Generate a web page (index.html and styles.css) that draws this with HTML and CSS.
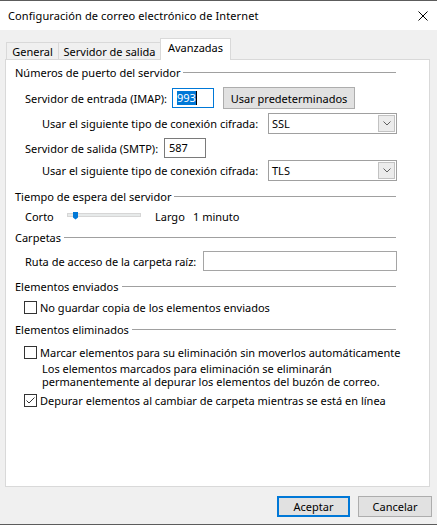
FILE: index.html
```html
<!DOCTYPE html>
<html lang="es">
<head>
<meta charset="utf-8">
<title>Configuración de correo electrónico de Internet</title>
<link rel="stylesheet" href="styles.css">
</head>
<body>
<div class="window">
  <div class="titlebar">
    <span class="title">Configuración de correo electrónico de Internet</span>
    <svg class="close" viewBox="0 0 10 10" width="10" height="10" aria-hidden="true">
      <path d="M0.5 0.5 L9.5 9.5 M9.5 0.5 L0.5 9.5" stroke="#000" stroke-width="1" fill="none"/>
    </svg>
  </div>
  <div class="client">
    <div class="tabs">
      <div class="tab tab-general">General</div>
      <div class="tab tab-server">Servidor de salida</div>
      <div class="tab tab-active">Avanzadas</div>
    </div>
    <div class="panel">
      <div class="content">
        <div class="group g-ports"><span>Números de puerto del servidor</span></div>

        <div class="row row-imap">
          <span class="lbl lbl-imap">Servidor de entrada (IMAP):</span>
          <div class="textbox textbox-port textbox-focus"><span class="sel">993</span><span class="caret"></span></div>
          <button class="btn btn-defaults" type="button">Usar predeterminados</button>
        </div>

        <div class="row row-enc1">
          <span class="lbl lbl-enc">Usar el siguiente tipo de conexión cifrada:</span>
          <div class="combo">
            <span class="combo-value">SSL</span>
            <span class="combo-btn"><svg viewBox="0 0 8 5" width="8" height="5" aria-hidden="true"><polyline points="0.5,0.5 4,4 7.5,0.5" fill="none" stroke="#606060" stroke-width="1"/></svg></span>
          </div>
        </div>

        <div class="row row-smtp">
          <span class="lbl lbl-smtp">Servidor de salida (SMTP):</span>
          <div class="textbox textbox-port"><span>587</span></div>
        </div>

        <div class="row row-enc2">
          <span class="lbl lbl-enc">Usar el siguiente tipo de conexión cifrada:</span>
          <div class="combo">
            <span class="combo-value">TLS</span>
            <span class="combo-btn"><svg viewBox="0 0 8 5" width="8" height="5" aria-hidden="true"><polyline points="0.5,0.5 4,4 7.5,0.5" fill="none" stroke="#606060" stroke-width="1"/></svg></span>
          </div>
        </div>

        <div class="group g-timeout"><span>Tiempo de espera del servidor</span></div>

        <div class="row row-slider">
          <span class="lbl lbl-short">Corto</span>
          <svg class="slider" viewBox="0 0 75 16" width="75" height="16" aria-hidden="true">
            <rect x="0.5" y="5.5" width="73" height="3" fill="#e7eaea" stroke="#d6d6d6"/>
            <polygon points="6,4 11,4 11,9.5 8.5,11.5 6,9.5" fill="#0078d7"/>
          </svg>
          <span class="lbl lbl-long">Largo</span>
          <span class="lbl">1 minuto</span>
        </div>

        <div class="group g-folders"><span>Carpetas</span></div>

        <div class="row row-root">
          <span class="lbl lbl-root">Ruta de acceso de la carpeta raíz:</span>
          <div class="textbox textbox-root"></div>
        </div>

        <div class="group g-sent"><span>Elementos enviados</span></div>

        <div class="row row-check row-check1">
          <span class="cb"></span>
          <span class="cb-label">No guardar copia de los elementos enviados</span>
        </div>

        <div class="group g-deleted"><span>Elementos eliminados</span></div>

        <div class="row row-check row-check2">
          <span class="cb"></span>
          <span class="cb-label">Marcar elementos para su eliminación sin moverlos automáticamente</span>
        </div>

        <div class="desc">Los elementos marcados para eliminación se eliminarán<br>permanentemente al depurar los elementos del buzón de correo.</div>

        <div class="row row-check row-check3">
          <span class="cb cb-checked"><svg viewBox="0 0 11 11" width="11" height="11" aria-hidden="true"><polyline points="1.5,5.5 4,8 9.5,2.5" fill="none" stroke="#333" stroke-width="1"/></svg></span>
          <span class="cb-label">Depurar elementos al cambiar de carpeta mientras se está en línea</span>
        </div>
      </div>
    </div>
    <div class="actions">
      <button class="btn btn-ok" type="button">Aceptar</button>
      <button class="btn btn-cancel" type="button">Cancelar</button>
    </div>
  </div>
</div>
</body>
</html>
```

FILE: styles.css
```css
* {
  box-sizing: border-box;
}

html,
body {
  margin: 0;
  padding: 0;
}

body {
  font-family: "Noto Sans", "Open Sans", sans-serif;
  font-size: 11px;
  color: #000;
  background: #f0f0f0;
}

.window {
  width: 437px;
  height: 525px;
  display: flex;
  flex-direction: column;
  border-top: 1px solid #5c5c5c;
  border-bottom: 1px solid #5c5c5c;
  background: #f0f0f0;
}

.titlebar {
  height: 29px;
  flex: none;
  background: #fff;
  display: flex;
  align-items: center;
  justify-content: space-between;
  padding: 0 9px 0 8px;
  line-height: 15px;
}

.title {
  letter-spacing: 0.1px;
}

.close {
  display: block;
  flex: none;
}

.client {
  flex: 1;
  display: flex;
  flex-direction: column;
  padding-left: 5px;
}

.tabs {
  display: flex;
  align-items: flex-end;
  height: 21px;
  margin-top: 8px;
  padding-left: 1px;
  flex: none;
}

.tab {
  height: 17px;
  border: 1px solid #d9d9d9;
  border-bottom: none;
  background: #f0f0f0;
  display: flex;
  align-items: center;
  justify-content: center;
  line-height: 15px;
  white-space: nowrap;
}

.tab-general {
  width: 53px;
}

.tab-server {
  width: 101px;
  border-left: none;
  border-right: none;
}

.tab-active {
  width: 71px;
  height: 22px;
  margin-bottom: -1px;
  background: #fff;
  align-items: flex-start;
  padding-top: 1px;
  position: relative;
  z-index: 1;
}

.panel {
  width: 425px;
  height: 428px;
  flex: none;
  border: 1px solid #d9d9d9;
  background: #fff;
  padding-left: 9px;
}

.content {
  width: 382px;
  display: flex;
  flex-direction: column;
}

.group {
  display: flex;
  align-items: center;
  gap: 3px;
  height: 15px;
  line-height: 15px;
  margin-right: 1px;
  flex: none;
  white-space: nowrap;
}

.group::after {
  content: "";
  flex: 1;
  height: 1px;
  background: #a0a0a0;
}

.g-ports { margin-top: 5px; }
.g-timeout { margin-top: 8px; }
.g-folders { margin-top: 6px; }
.g-sent { margin-top: 8px; }
.g-deleted { margin-top: 7px; }

.row {
  display: flex;
  align-items: center;
  flex: none;
  white-space: nowrap;
}

.lbl {
  flex: none;
  line-height: 15px;
}

.row-imap {
  height: 22px;
  margin-top: 7px;
  padding-left: 10px;
}

.lbl-imap { width: 147px; }

.row-enc1 {
  height: 21px;
  margin-top: 4px;
  padding-left: 27px;
}

.row-smtp {
  height: 20px;
  margin-top: 4px;
  padding-left: 10px;
}

.lbl-smtp { width: 139px; }

.row-enc2 {
  height: 21px;
  margin-top: 2px;
  padding-left: 27px;
}

.lbl-enc { width: 226px; }

.row-slider {
  height: 16px;
  margin-top: 4px;
  padding-left: 10px;
}

.lbl-short { width: 42px; }

.slider {
  display: block;
  flex: none;
}

.lbl-long {
  width: 38px;
  margin-left: 13px;
}

.row-root {
  height: 20px;
  margin-top: 6px;
  padding-left: 10px;
}

.lbl-root { width: 178px; }

.textbox {
  height: 20px;
  border: 1px solid #7a7a7a;
  background: #fff;
  display: flex;
  align-items: center;
  padding-left: 4px;
  line-height: 14px;
  flex: none;
}

.textbox-port { width: 42px; }

.textbox-focus { border-color: #0078d7; }

.textbox-root {
  width: 194px;
  border-color: #a5a5a5;
}

.sel {
  background: #0078d7;
  color: #fff;
  line-height: 14px;
}

.caret {
  width: 1px;
  height: 14px;
  background: #000;
}

.btn {
  font: inherit;
  color: #000;
  background: #e1e1e1;
  border: 1px solid #adadad;
  padding: 0;
  margin: 0;
  line-height: 15px;
  flex: none;
}

.btn-defaults {
  width: 132px;
  height: 22px;
  margin-left: 9px;
}

.combo {
  width: 129px;
  height: 21px;
  border: 1px solid #a0a0a0;
  background: #fff;
  display: flex;
  align-items: center;
  padding: 1px;
  flex: none;
}

.combo-value {
  flex: 1;
  padding-left: 2px;
  line-height: 15px;
}

.combo-btn {
  width: 17px;
  height: 17px;
  border: 1px solid #c2c2c2;
  background: #ececec;
  display: flex;
  align-items: center;
  justify-content: center;
  flex: none;
}

.combo-btn svg {
  display: block;
}

.row-check {
  height: 16px;
  padding-left: 9px;
}

.row-check1 { margin-top: 5px; }
.row-check2 { margin-top: 7px; }
.row-check3 { margin-top: 4px; }

.cb {
  width: 13px;
  height: 13px;
  border: 1px solid #333;
  background: #fff;
  flex: none;
  display: flex;
  align-items: center;
  justify-content: center;
}

.cb svg {
  display: block;
}

.cb-label {
  margin-left: 3px;
  line-height: 15px;
}

.desc {
  margin-top: 2px;
  padding-left: 27px;
  line-height: 13px;
  height: 26px;
  white-space: nowrap;
  flex: none;
}

.actions {
  display: flex;
  justify-content: flex-end;
  gap: 8px;
  margin-top: 9px;
  padding-right: 5px;
  flex: none;
}

.btn-ok {
  width: 73px;
  height: 21px;
  border: 2px solid #0078d7;
}

.btn-cancel {
  width: 74px;
  height: 21px;
}
```
